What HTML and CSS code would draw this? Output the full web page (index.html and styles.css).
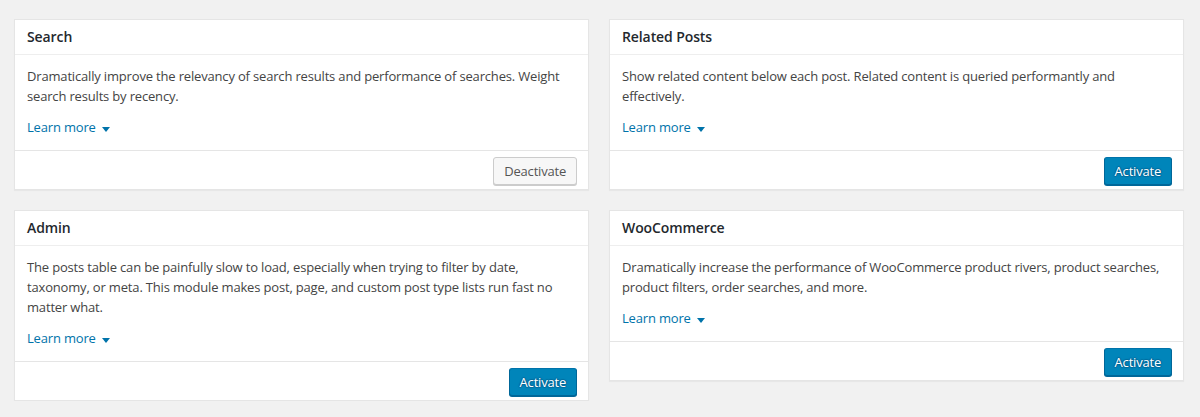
FILE: index.html
```html
<!DOCTYPE html>
<html>
<head>
<meta charset="utf-8">
<link rel="stylesheet" href="styles.css">
</head>
<body>
<div class="modules">
  <div class="card">
    <div class="card-header"><h2 class="card-title">Search</h2></div>
    <div class="card-body">
      <p class="desc">Dramatically improve the relevancy of search results and performance of searches. Weight search results by recency.</p>
      <p class="learn"><a class="learn-link" href="#">Learn more <svg class="arrow" width="8" height="5" viewBox="0 0 8 5"><path d="M0 0H8L4 5Z" fill="#0073aa"/></svg></a></p>
    </div>
    <div class="card-footer"><button class="btn btn-secondary">Deactivate</button></div>
  </div>
  <div class="card">
    <div class="card-header"><h2 class="card-title">Related Posts</h2></div>
    <div class="card-body">
      <p class="desc">Show related content below each post. Related content is queried performantly and effectively.</p>
      <p class="learn"><a class="learn-link" href="#">Learn more <svg class="arrow" width="8" height="5" viewBox="0 0 8 5"><path d="M0 0H8L4 5Z" fill="#0073aa"/></svg></a></p>
    </div>
    <div class="card-footer"><button class="btn btn-primary">Activate</button></div>
  </div>
  <div class="card">
    <div class="card-header"><h2 class="card-title">Admin</h2></div>
    <div class="card-body">
      <p class="desc">The posts table can be painfully slow to load, especially when trying to filter by date, taxonomy, or meta. This module makes post, page, and custom post type lists run fast no matter what.</p>
      <p class="learn"><a class="learn-link" href="#">Learn more <svg class="arrow" width="8" height="5" viewBox="0 0 8 5"><path d="M0 0H8L4 5Z" fill="#0073aa"/></svg></a></p>
    </div>
    <div class="card-footer"><button class="btn btn-primary">Activate</button></div>
  </div>
  <div class="card">
    <div class="card-header"><h2 class="card-title">WooCommerce</h2></div>
    <div class="card-body">
      <p class="desc">Dramatically increase the performance of WooCommerce product rivers, product searches, product filters, order searches, and more.</p>
      <p class="learn"><a class="learn-link" href="#">Learn more <svg class="arrow" width="8" height="5" viewBox="0 0 8 5"><path d="M0 0H8L4 5Z" fill="#0073aa"/></svg></a></p>
    </div>
    <div class="card-footer"><button class="btn btn-primary">Activate</button></div>
  </div>
</div>
</body>
</html>
```

FILE: styles.css
```css
* { box-sizing: border-box; }
html, body { margin: 0; padding: 0; }
body {
  background: #f1f1f1;
  font-family: "Open Sans", "Noto Sans", sans-serif;
  font-size: 13px;
  color: #444;
}
.modules {
  padding: 19px 16px 0 14px;
  display: grid;
  grid-template-columns: 1fr 1fr;
  column-gap: 20px;
  row-gap: 20px;
  align-items: start;
}
.card {
  background: #fff;
  border: 1px solid #e5e5e5;
  box-shadow: 0 1px 1px rgba(0,0,0,.04);
}
.card-header {
  padding: 7px 12px;
  border-bottom: 1px solid #eee;
}
.card-title {
  margin: 0;
  font-size: 14px;
  line-height: 20px;
  font-weight: 600;
  color: #23282d;
  letter-spacing: -0.1px;
}
.card-body {
  padding: 0 12px 13px;
}
.desc {
  margin: 11px 0 0;
  line-height: 20px;
  letter-spacing: -0.17px;
}
.learn {
  margin: 11px 0 0;
  line-height: 20px;
  letter-spacing: -0.17px;
}
.learn-link {
  color: #0073aa;
  text-decoration: none;
}
.arrow {
  margin-left: 3px;
  vertical-align: 0;
}
.card-footer {
  border-top: 1px solid #e5e5e5;
  padding: 6px 11px 4px 12px;
  display: flex;
  justify-content: flex-end;
}
.btn {
  height: 28px;
  margin: 0;
  padding: 0 10px 1px;
  font-family: "Open Sans", "Noto Sans", sans-serif;
  font-size: 13px;
  line-height: 26px;
  letter-spacing: -0.2px;
  border-radius: 3px;
  border: 1px solid;
  cursor: pointer;
}
.btn-secondary {
  background: #f7f7f7;
  border-color: #ccc;
  color: #555;
  box-shadow: 0 1px 0 #ccc;
}
.btn-primary {
  background: #0085ba;
  border-color: #0073aa #006799 #006799;
  color: #fff;
  box-shadow: 0 1px 0 #006799;
  text-shadow: 0 -1px 1px #006799, 1px 0 1px #006799, 0 1px 1px #006799, -1px 0 1px #006799;
}
```
